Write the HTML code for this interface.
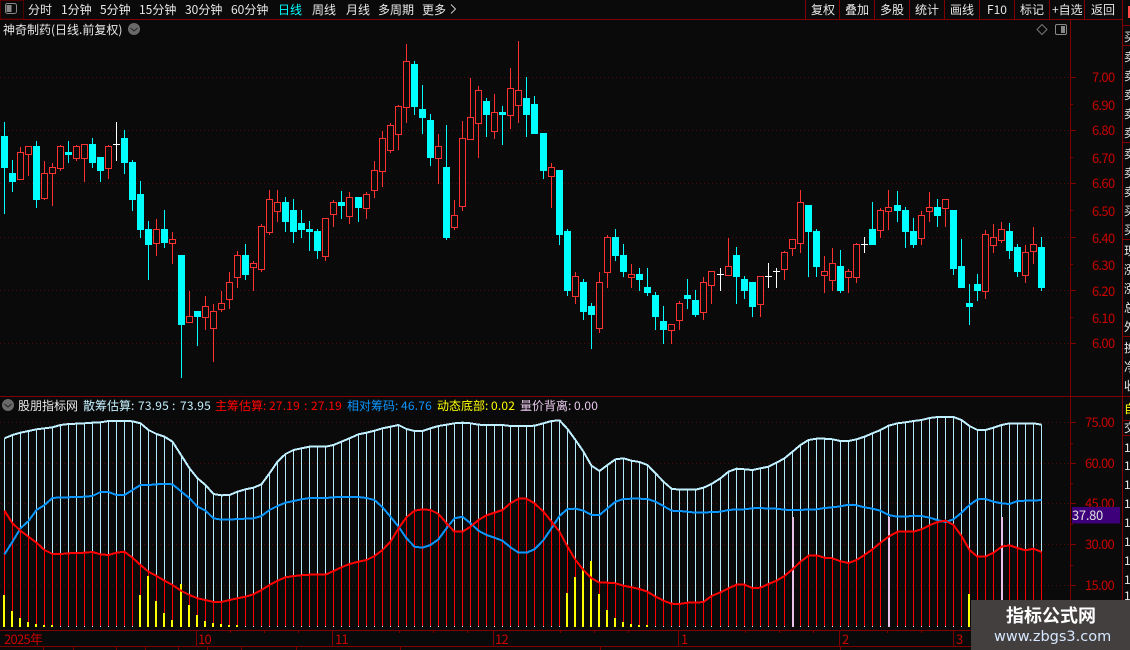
<!DOCTYPE html>
<html><head><meta charset="utf-8"><style>
html,body{margin:0;padding:0;background:#0a0a0a;width:1130px;height:650px;overflow:hidden}
svg{display:block;position:absolute;left:0;top:0}
text{font-family:"WenQuanYi Zen Hei","Noto Sans CJK SC","Liberation Sans",sans-serif;font-size:12px;fill:#e8e8e8}
.ax{fill:#c80000;font-size:13px;letter-spacing:-.7px}
</style></head><body>
<svg id="s" width="1130" height="650" viewBox="0 0 1130 650" xmlns="http://www.w3.org/2000/svg">
<rect width="1130" height="650" fill="#0a0a0a"/>
<g id="chart"></g>
<g fill="none" stroke="#800000" shape-rendering="crispEdges">
<path d="M0 19.5H1122M0 396.5H1130M0 630.5H1122M0 646.5H1122M1070.5 19V646M1122.5 0V646M23.5 0V19M805.5 0V19M839.5 0V19M874.5 0V19M909.5 0V19M944.5 0V19M979.5 0V19M1014.5 0V19M1049.5 0V19M1084.5 0V19"/>
<path d="M1122 25.5H1130M1122 45.5H1130M1122 142.5H1130M1122 239.5H1130M1122 336.5H1130M1122 420.5H1130M1122 435.5H1130"/>
<path d="M1070 77.5H1076M1070 104.5H1073M1070 130.5H1076M1070 157.5H1073M1070 183.5H1076M1070 210.5H1073M1070 237.5H1076M1070 264.5H1073M1070 290.5H1076M1070 317.5H1073M1070 343.5H1076"/>
<path d="M1070 422.5H1076M1070 443.5H1073M1070 463.5H1076M1070 483.5H1073M1070 503.5H1076M1070 524.5H1073M1070 544.5H1076M1070 565.5H1073M1070 585.5H1076M1070 606.5H1073"/>
<path d="M196.5 630V646M332.5 630V646M493.5 630V646M678.5 630V646M839.5 630V646M953.5 630V646"/>
<path d="M230.5 630V633M264.5 630V633M298.5 630V633M399.5 630V633M433.5 630V633M467.5 630V633M560.5 630V633M594.5 630V633M628.5 630V633M745.5 630V633M779.5 630V633M813.5 630V633M887.5 630V633M921.5 630V633M1001.5 630V633M1035.5 630V633"/>
<path d="M43.5 646V650M73.5 646V650M116.5 646V650M145.5 646V650M178.5 646V650M207.5 646V650M241.5 646V650M296.5 646V650M400.5 646V650M600.5 646V650M840.5 646V650"/>
</g>
<rect x="1128" y="6" width="2" height="12" fill="#ff4a4a"/>
<rect x="0.500" y="0.500" width="23" height="18.500" fill="none" stroke="#500000"/>
<rect x="5.500" y="3.500" width="11" height="10" rx="2" fill="none" stroke="#888" stroke-width="1"/><rect x="6.500" y="5" width="5" height="7" fill="#888"/>
<text x="28" y="14">分时</text>
<text x="61" y="14">1分钟</text>
<text x="100" y="14">5分钟</text>
<text x="139" y="14">15分钟</text>
<text x="185" y="14">30分钟</text>
<text x="231" y="14">60分钟</text>
<text x="278" y="14" style="fill:#00ffff">日线</text>
<text x="312" y="14">周线</text>
<text x="346" y="14">月线</text>
<text x="378" y="14">多周期</text>
<text x="422" y="14">更多</text>
<path d="M451 4.500l4.500 4.500-4.500 4.500" fill="none" stroke="#ccc"/>
<text x="811" y="14">复权</text>
<text x="845" y="14">叠加</text>
<text x="880" y="14">多股</text>
<text x="915" y="14">统计</text>
<text x="950" y="14">画线</text>
<text x="987" y="14">F10</text>
<text x="1020" y="14">标记</text>
<text x="1052" y="14">+自选</text>
<text x="1091" y="14">返回</text>
<text x="3" y="34">神奇制药(日线.前复权)</text>
<circle cx="134" cy="29" r="6" fill="#6a6a6a"/><path d="M130.500 28l3.500 3 3.500-3" fill="none" stroke="#222"/>
<path d="M1042 24.500l5 5-5 5-5-5z" fill="none" stroke="#777"/>
<rect x="1055.500" y="24.500" width="11" height="10" rx="1.500" fill="none" stroke="#888"/><rect x="1061" y="26" width="4" height="7" fill="#888"/>
<text class="ax" x="1092" y="82">7.00</text>
<text class="ax" x="1092" y="110">6.90</text>
<text class="ax" x="1092" y="135">6.80</text>
<text class="ax" x="1092" y="163">6.70</text>
<text class="ax" x="1092" y="188">6.60</text>
<text class="ax" x="1092" y="216">6.50</text>
<text class="ax" x="1092" y="243">6.40</text>
<text class="ax" x="1092" y="270">6.30</text>
<text class="ax" x="1092" y="296">6.20</text>
<text class="ax" x="1092" y="323">6.10</text>
<text class="ax" x="1092" y="348">6.00</text>
<text class="ax" x="1085" y="427">75.00</text>
<text class="ax" x="1085" y="468">60.00</text>
<text class="ax" x="1085" y="508">45.00</text>
<text class="ax" x="1085" y="549">30.00</text>
<text class="ax" x="1085" y="590">15.00</text>
<rect x="1072" y="507" width="48" height="16.500" fill="#3d007a"/>
<text x="1072" y="520" style="fill:#e0e0e0;font-size:13px;letter-spacing:-.3px">37.80</text>
<circle cx="8" cy="405" r="6" fill="#6a6a6a"/><path d="M4.500 404l3.500 3 3.500-3" fill="none" stroke="#222"/>
<text x="18" y="410">股朋指标网</text>
<text x="83" y="410" style="fill:#c4f0ff">散筹估算:</text><text x="138" y="410" style="fill:#c4f0ff;letter-spacing:.2px">73.95</text><text x="172" y="410" style="fill:#c4f0ff">:</text><text x="180" y="410" style="fill:#c4f0ff;letter-spacing:.2px">73.95</text>
<text x="215" y="410" style="fill:#ff0000">主筹估算:</text><text x="269" y="410" style="fill:#ff0000;letter-spacing:.2px">27.19</text><text x="304" y="410" style="fill:#ff0000">:</text><text x="311" y="410" style="fill:#ff0000;letter-spacing:.2px">27.19</text>
<text x="347" y="410" style="fill:#0a96ff">相对筹码:</text><text x="401" y="410" style="fill:#0a96ff;letter-spacing:.2px">46.76</text>
<text x="437" y="410" style="fill:#ffff00">动态底部:</text><text x="491" y="410" style="fill:#ffff00;letter-spacing:.2px">0.02</text>
<text x="520" y="410" style="fill:#e8c8ec">量价背离:</text><text x="574" y="410" style="fill:#e8c8ec;letter-spacing:.2px">0.00</text>
<text class="ax" x="4" y="644">2025年</text>
<text class="ax" x="198" y="644">10</text>
<text class="ax" x="335" y="644">11</text>
<text class="ax" x="495" y="644">12</text>
<text class="ax" x="681" y="644">1</text>
<text class="ax" x="842" y="644">2</text>
<text class="ax" x="956" y="644">3</text>
<svg x="1122" y="0" width="8" height="650" viewBox="1122 0 8 650">
<text x="1124" y="41">买</text>
<text x="1124" y="61">卖</text><text x="1124" y="80">卖</text><text x="1124" y="99">卖</text><text x="1124" y="118">卖</text><text x="1124" y="137">卖</text>
<text x="1124" y="158">卖</text><text x="1124" y="177">卖</text><text x="1124" y="196">卖</text><text x="1124" y="215">买</text><text x="1124" y="234">买</text>
<text x="1124" y="255">现</text><text x="1124" y="274">涨</text><text x="1124" y="293">涨</text><text x="1124" y="312">总</text><text x="1124" y="331">外</text>
<text x="1124" y="352">换</text><text x="1124" y="371">净</text><text x="1124" y="390">收</text>
<text x="1124" y="413" style="fill:#ffff00">自</text>
<text x="1124" y="432">交</text>
<text x="1124" y="452">1</text><text x="1124" y="470">1</text><text x="1124" y="489">1</text><text x="1124" y="508">1</text><text x="1124" y="527">1</text><text x="1124" y="546">1</text><text x="1124" y="565">1</text><text x="1124" y="584">1</text><text x="1124" y="600">1</text>
</svg>
<rect x="971" y="600" width="159" height="50" fill="#443f3f"/>
<text x="1006" y="622" style="fill:#fff;font-size:18px;font-weight:bold;font-family:'Noto Sans CJK SC',sans-serif">指标公式网</text>
<text x="994" y="641" style="fill:#d6e8ff;font-size:14.500px;font-family:'DejaVu Sans',sans-serif">www.zbgs3.com</text>
</svg>
<script>
(function(){
var C=[
["c",122,136,167,213],["c",160,173,181,191],["r",147,152,179,179],["r",146,146,154,175],["c",141,146,199,207],["r",161,173,198,199],["r",163,167,173,205],["r",145,146,168,170],["c",141,152,154,162],["r",145,146,158,160],
["r",144,144,158,181],["c",138,144,162,167],["c",157,157,170,181],["r",145,146,168,178],["w",122,144,144,160],["c",130,138,162,173],["c",160,162,199,210],["c",181,194,229,237],["c",221,229,244,279],["r",219,229,243,255],
["c",210,229,242,247],["r",232,239,243,263],["c",255,255,324,377],["r",291,316,322,322],["c",311,311,316,345],["r",296,306,317,329],["r",304,311,328,361],["r",291,303,309,311],["r",272,282,299,308],["r",251,255,277,287],
["c",244,255,274,279],["r",261,263,267,290],["r",224,226,269,271],["r",190,199,232,234],["r",190,202,211,221],["c",197,202,221,231],["c",199,210,231,242],["c",210,223,229,237],["c",221,229,231,250],["c",229,231,250,258],
["r",218,218,256,260],["r",200,202,214,226],["c",191,202,205,218],["r",192,197,216,223],["c",197,197,207,221],["r",192,194,208,218],["r",161,170,190,197],["r",131,138,171,186],["r",123,125,150,152],["r",105,106,134,149],
["r",44,61,107,122],["c",61,64,106,114],["c",85,109,117,133],["c",114,120,157,165],["r",134,146,158,183],["c",125,167,237,239],["r",200,215,227,229],["r",121,138,206,210],["r",78,117,139,139],["r",86,90,123,157],
["c",98,101,114,136],["r",94,112,131,138],["c",106,112,114,144],["r",68,88,115,128],["r",41,90,105,122],["c",77,98,114,136],["c",96,104,133,133],["c",133,133,170,178],["r",163,167,176,207],["c",170,170,234,244],
["c",229,231,290,295],["r",272,276,296,303],["c",279,282,311,319],["c",303,306,314,348],["r",272,282,328,332],["r",235,237,272,287],["c",229,237,255,260],["c",244,255,271,276],["r",264,274,277,287],["c",268,274,279,290],
["c",268,287,292,295],["c",292,295,316,329],["c",306,321,329,343],["r",324,324,330,343],["r",301,303,320,329],["c",279,295,298,308],["c",290,300,314,316],["r",277,282,312,319],["r",271,271,285,303],["w",268,274,274,290],
["r",238,266,275,275],["c",247,255,276,303],["c",276,279,290,298],["c",282,282,306,316],["r",276,276,304,316],["w",263,276,276,287],["w",268,271,271,287],["r",251,252,269,279],["r",239,239,248,255],["r",190,202,243,252],
["c",205,205,231,276],["c",229,231,266,276],["r",256,271,275,292],["r",248,263,280,290],["c",250,266,290,292],["r",269,271,277,292],["r",243,244,277,282],["w",237,244,244,252],["c",202,229,244,244],["r",208,210,230,237],
["r",190,207,211,229],["c",191,205,210,221],["c",207,210,231,247],["c",218,231,244,247],["r",211,215,238,244],["r",192,207,211,221],["c",199,207,215,226],["r",199,199,208,226],["c",210,210,268,274],["c",239,266,287,287],
["c",284,303,306,324],["c",274,284,290,300],["r",230,234,291,298],["r",224,237,245,252],["r",222,229,240,242],["c",223,231,250,258],["c",244,247,271,276],["r",245,252,275,282],["r",227,244,251,263],["c",237,247,287,290]];
var T=[145,135,128,123,118,115,112,105,102,101,100,98,97,93,93,93,94,100,120,132,140,155,197,235,265,285,312,316,315,305,298,293,283,250,215,192,180,175,170,170,170,165,155,145,133,128,122,115,110,105,117,123,123,115,108,104,100,98,100,104,105,105,105,108,108,108,107,100,93,91,117,150,185,227,243,225,208,205,212,216,225,250,275,296,299,299,299,293,282,265,245,236,238,240,235,230,218,205,185,165,150,146,146,148,153,153,148,140,130,120,107,100,97,93,90,84,81,81,81,90,108,120,120,113,105,100,100,100,100,104];
var B=[493,455,415,393,360,345,324,322,322,321,320,318,306,306,315,315,300,285,285,283,282,283,305,325,350,362,385,389,389,387,386,385,378,360,348,338,333,328,324,324,324,322,321,321,321,324,330,352,380,410,445,470,473,465,448,415,385,380,400,422,435,443,452,472,488,488,478,450,415,378,357,356,362,375,375,355,335,327,326,326,327,335,348,362,363,365,368,368,366,365,360,358,358,355,354,356,356,359,360,360,358,358,354,352,349,344,346,352,356,362,375,380,380,377,378,383,390,396,388,368,345,328,327,335,340,342,333,332,332,330];
var R=[362,400,422,440,458,480,492,492,490,489,488,486,493,495,488,485,503,525,545,558,572,585,603,615,625,630,636,636,630,625,620,613,600,585,572,562,558,556,554,554,554,543,532,522,515,510,498,480,455,415,382,362,358,360,372,400,425,425,410,390,376,368,360,340,326,326,340,365,395,425,470,510,540,565,578,578,580,587,592,597,605,620,632,641,642,638,638,636,618,607,595,584,584,594,593,582,572,558,538,515,497,496,503,505,514,519,510,495,478,458,440,425,425,425,418,406,396,392,405,438,480,500,500,488,470,466,474,481,476,486];
var Y={0:615,1:663,2:684,3:696,4:702,5:705,6:705,17:615,18:558,19:633,20:669,21:690,22:582,23:645,24:675,25:693,26:699,27:702,28:705,29:705,70:609,71:561,72:534,73:513,74:612,75:660,76:684,77:696,78:702,79:705,80:705,120:612};
function X(i){return 4+8*i+(i>=22)+(i>=44)+(i>=67)+(i>=89)+(i>=111)}
function y(v){return 390+v/3}
var ns="http://www.w3.org/2000/svg",g=document.getElementById("chart");
function P(d,s,w,f,cr){var p=document.createElementNS(ns,"path");p.setAttribute("d",d);p.setAttribute("stroke",s||"none");p.setAttribute("stroke-width",w||1);p.setAttribute("fill",f||"none");if(cr)p.setAttribute("shape-rendering","crispEdges");p.setAttribute("stroke-linejoin","round");g.appendChild(p);return p}
var dots="";[77,130,183,237,290,343,422,463,503,544,585].forEach(function(v){dots+="M0 "+(v+.5)+"H1070"});
P(dots,"#4c0c0c",1,null,1).setAttribute("stroke-dasharray","1 3");
var n=C.length,cW="",rW="",wW="",cBody="",rBody="",wH="",i,c,x;
for(i=0;i<n;i++){c=C[i];x=X(i);var xp=x+.5;
 var w="M"+xp+" "+c[1]+"V"+(c[4]+1);
 if(c[0]=="c"){cW+=w;cBody+="M"+(x-3)+" "+c[2]+"H"+(x+4)+"V"+(c[3]+1)+"H"+(x-3)+"Z"}
 else if(c[0]=="r"){rW+=w;rBody+="M"+(x-2.5)+" "+(c[2]+.5)+"H"+(x+3.5)+"V"+(c[3]+.5)+"H"+(x-2.5)+"Z"}
 else{wW+=w;wH+="M"+(x-3)+" "+(c[2]+.5)+"H"+(x+4)}
}
P(cW,"#00ffff",1,null,1);P(rW,"#ff3232",1,null,1);P(wW,"#ffffff",1,null,1);P(wH,"#ffffff",1,null,1);
P(cBody,null,1,"#00ffff",1);P(rBody,"#ff3232",1,"#0a0a0a",1);
var lo="",re="",pi="",ye="",bt="";
for(i=0;i<n;i++){x=X(i);var xs=x+.5;
 lo+="M"+xs+" "+y(T[i]).toFixed(1)+"V"+y(R[i]).toFixed(1);
 re+="M"+xs+" "+y(R[i]).toFixed(1)+"V626";
 bt+="M"+xs+" 626V627";
}
P(lo,"#b4e8fa",1,null,1);P(re,"#ff0000",1,null,1);P(bt,"#e8e8e8",1,null,1);
for(var k in Y){x=X(+k);ye+="M"+(x-1)+" "+Math.round(y(Y[k]))+"h2V627h-2Z"}
P(ye,null,1,"#ffff00",1);
[98,110,124].forEach(function(i){x=X(i);pi+="M"+x+" 517h2V627h-2Z"});
P(pi,null,1,"#e8c0e8",1);
function L(a){var d="";a.forEach(function(v,i){d+=(i?"L":"M")+(X(i)+.5)+" "+y(v).toFixed(1)});return d}
P(L(T),"#c0f0ff",2,null,1);P(L(B),"#0a96ff",2,null,1);P(L(R),"#ff0000",2,null,1);
})();
</script>
</body></html>
